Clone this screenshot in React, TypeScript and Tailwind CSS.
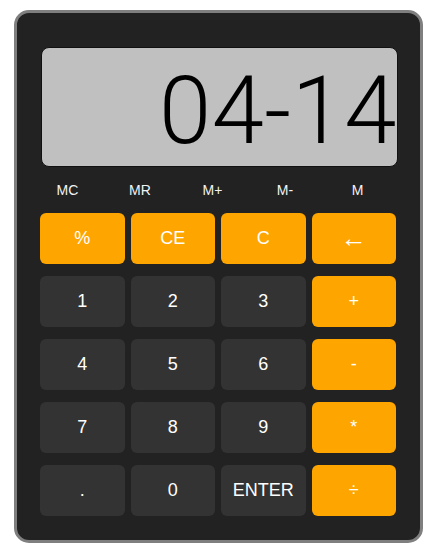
import React, { useState } from 'react';

type Key = { label: string; accent?: boolean };

const memoryKeys = ['MC', 'MR', 'M+', 'M-', 'M'];

const keys: Key[] = [
    { label: '%', accent: true },
    { label: 'CE', accent: true },
    { label: 'C', accent: true },
    { label: '←', accent: true },
    { label: '1' },
    { label: '2' },
    { label: '3' },
    { label: '+', accent: true },
    { label: '4' },
    { label: '5' },
    { label: '6' },
    { label: '-', accent: true },
    { label: '7' },
    { label: '8' },
    { label: '9' },
    { label: '*', accent: true },
    { label: '.' },
    { label: '0' },
    { label: 'ENTER' },
    { label: '÷', accent: true },
];

const App: React.FC = () => {
    const [display] = useState('04-14');

    return (
        <div className="min-h-[557px] bg-white pt-[10px] font-['Liberation_Sans',Arial,sans-serif]">
            <div className="ml-[14px] w-[409px] rounded-[15px] border-[3px] border-[#7f7f7f] bg-[#222222] pl-[23px] pr-[24px] pt-[34px] pb-[24px]">
                <div className="-mr-[2px] ml-[1px] flex h-[120px] items-center justify-end rounded-lg border border-[#111] bg-[#c0c0c0] pt-[8px]">
                    <span className="font-['Roboto',sans-serif] text-[94px] font-light leading-none tracking-[0.5px] text-black">{display}</span>
                </div>

                <div className="flex h-[46px] items-center justify-between pr-[11px]">
                    {memoryKeys.map(m => (
                        <button key={m} className="w-[55px] text-center text-[14px] text-[#f2f2f2]">
                            {m}
                        </button>
                    ))}
                </div>

                <div className="grid grid-cols-4 gap-x-[6px] gap-y-[12px]">
                    {keys.map(k => (
                        <button
                            key={k.label}
                            className={`flex h-[51px] items-center justify-center rounded-[6px] text-white ${
                                k.label === '←' ? 'text-[26px]' : 'text-[18px]'
                            } ${k.accent ? 'bg-[#ffa500]' : 'bg-[#333333]'}`}
                        >
                            {k.label}
                        </button>
                    ))}
                </div>
            </div>
        </div>
    );
};

export default App;
